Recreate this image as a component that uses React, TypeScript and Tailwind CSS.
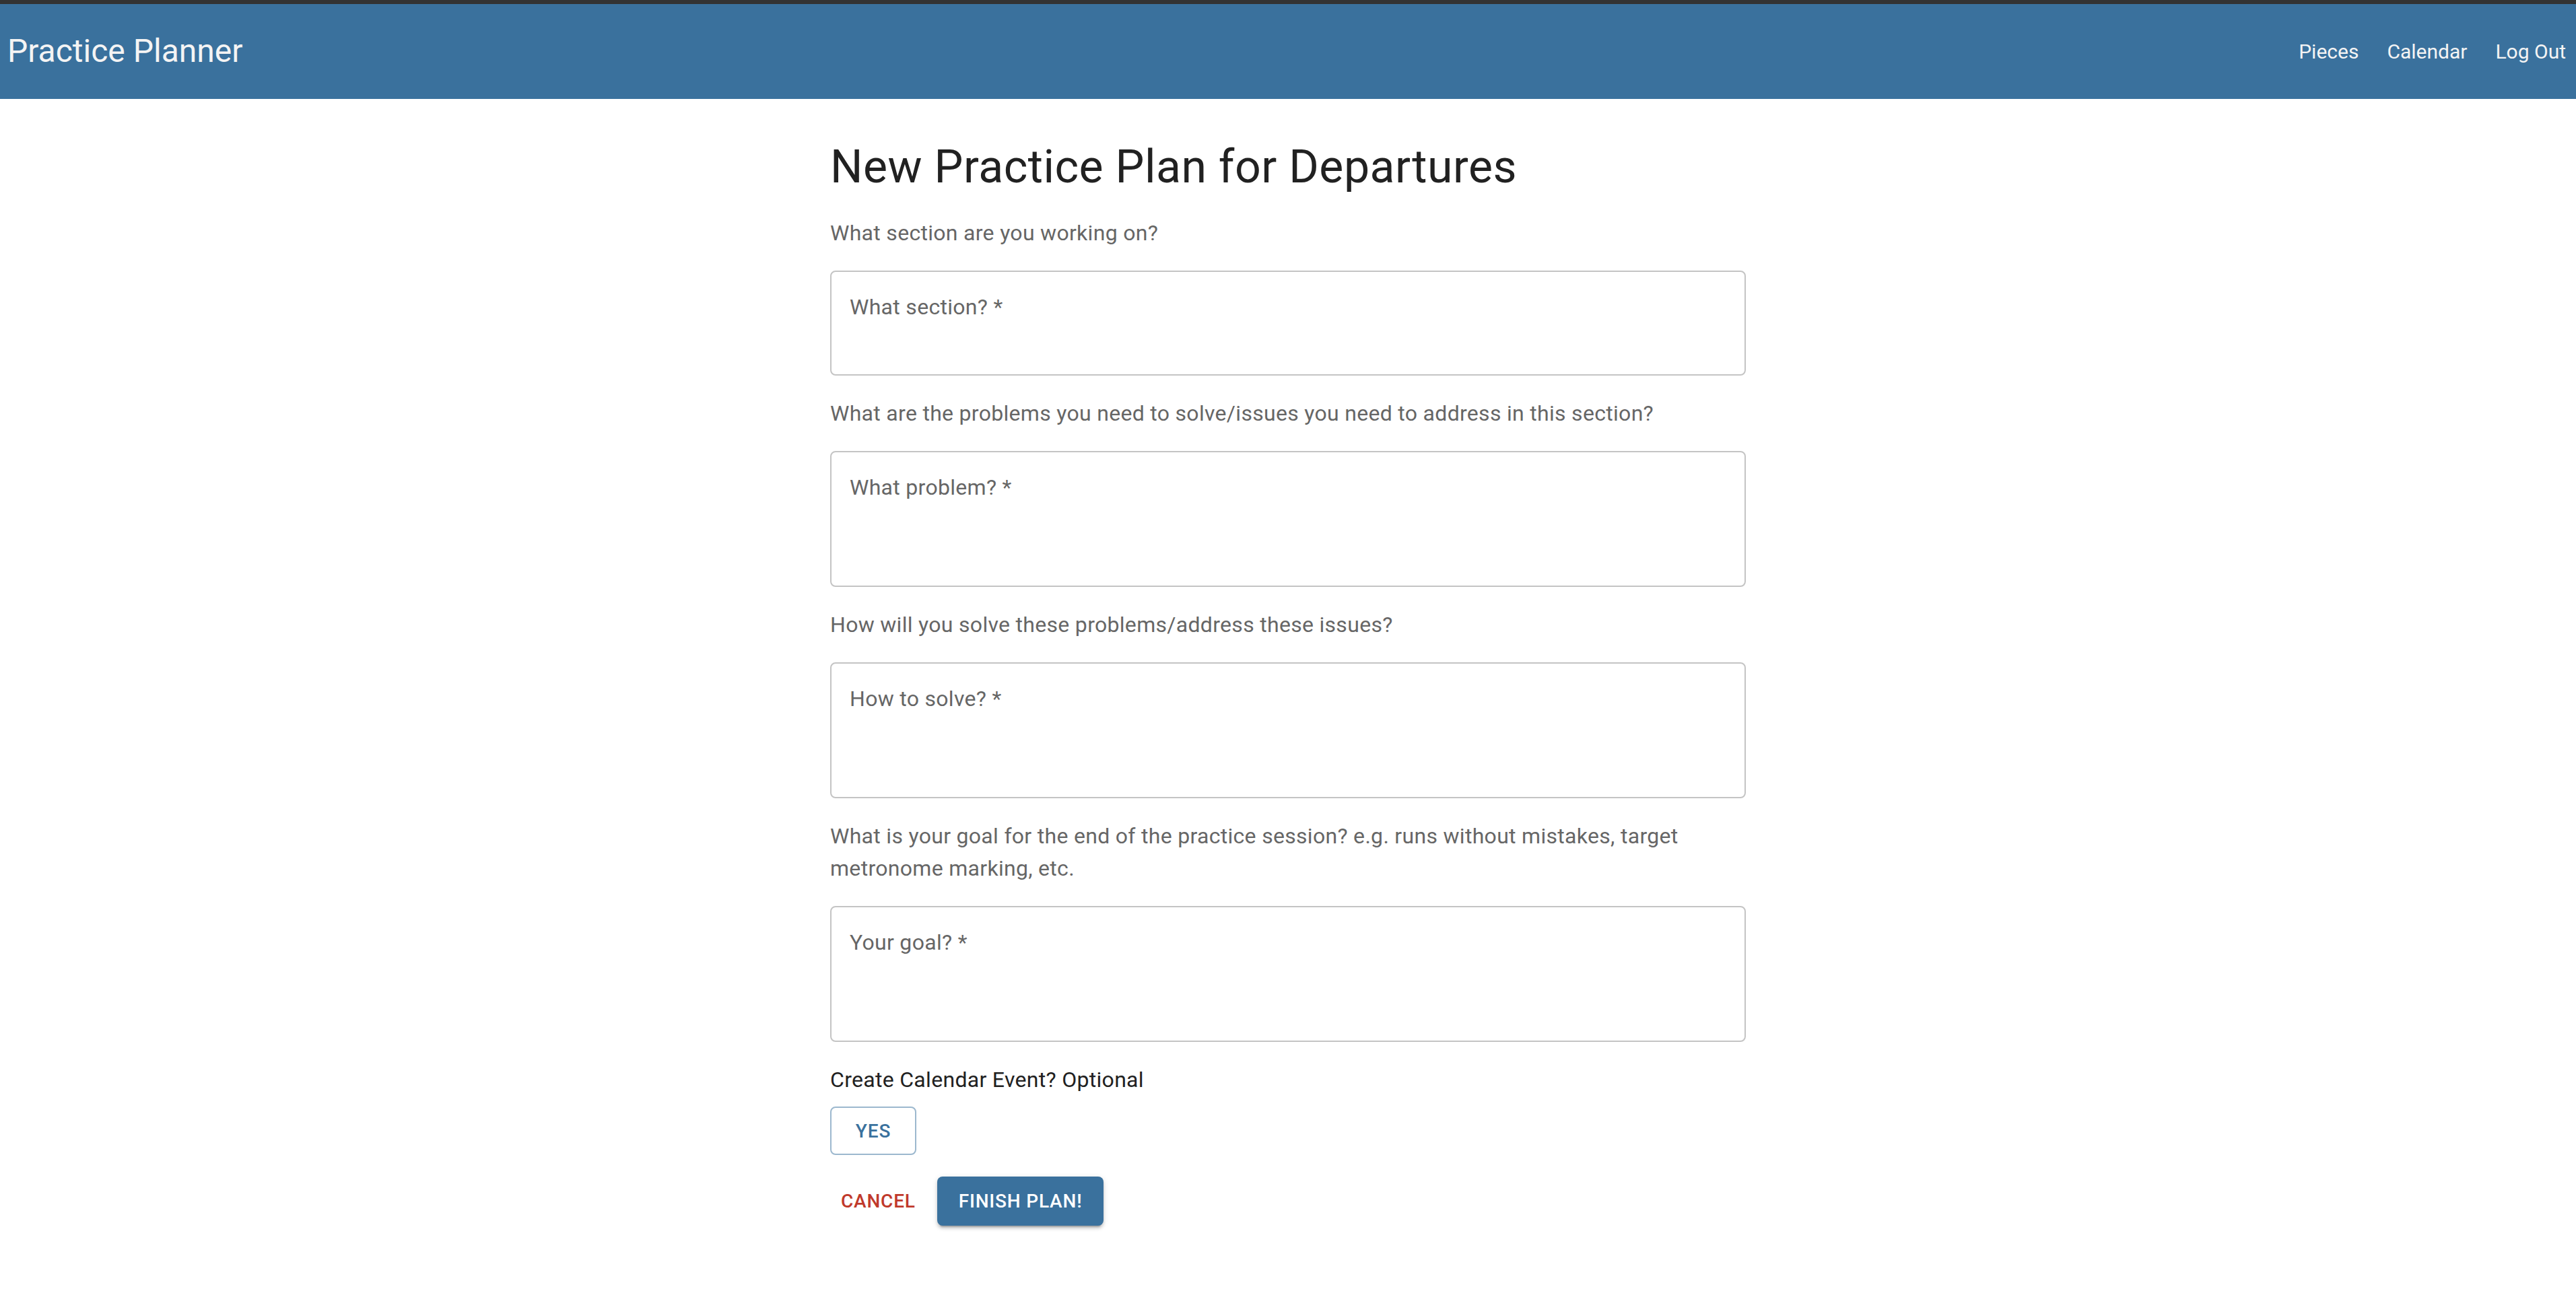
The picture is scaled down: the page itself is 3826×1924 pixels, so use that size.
const questions = [
  {
    prompt: "What section are you working on?",
    label: "What section? *",
    height: "h-[156px]",
  },
  {
    prompt: "What are the problems you need to solve/issues you need to address in this section?",
    label: "What problem? *",
    height: "h-[202px]",
  },
  {
    prompt: "How will you solve these problems/address these issues?",
    label: "How to solve? *",
    height: "h-[202px]",
  },
  {
    prompt:
      "What is your goal for the end of the practice session? e.g. runs without mistakes, target metronome marking, etc.",
    label: "Your goal? *",
    height: "h-[202px]",
  },
];

function OutlinedField({ label, height }: { label: string; height: string }) {
  return (
    <div className={`${height} rounded-[8px] border-2 border-[#c4c4c4] bg-white pl-[27px] pt-[29px]`}>
      <span className="block text-[32px] leading-[46px] tracking-[0.3px] text-[#666666]">{label}</span>
    </div>
  );
}

export default function App() {
  return (
    <div className="min-h-screen bg-white font-['Roboto','Liberation_Sans',sans-serif]">
      <div className="h-[6px] bg-[#333333]" />
      <header className="flex h-[141px] items-center justify-between bg-[#3a719d] pl-[11px] pr-[15px] text-[#f4f4f4]">
        <h1 className="text-[48px] font-normal leading-[1.334]">Practice Planner</h1>
        <nav className="flex items-center gap-[42px] text-[30px] leading-[1.5]">
          <a href="#">Pieces</a>
          <a href="#">Calendar</a>
          <a href="#">Log Out</a>
        </nav>
      </header>

      <main className="mx-auto flex w-[1360px] flex-col gap-[32px] pt-[59px] pb-[80px]">
        <h2 className="text-[68px] font-normal leading-[84px] tracking-[0.5px] text-[#212121]">
          New Practice Plan for Departures
        </h2>

        {questions.map((q) => (
          <div key={q.label} className="flex flex-col gap-[32px]">
            <p className="text-[32px] leading-[48px] tracking-[0.3px] text-[#666666]">{q.prompt}</p>
            <OutlinedField label={q.label} height={q.height} />
          </div>
        ))}

        <div className="flex flex-col items-start gap-[16px]">
          <p className="text-[32px] leading-[48px] tracking-[0.3px] text-[#212121]">
            Create Calendar Event? Optional
          </p>
          <button
            type="button"
            className="flex h-[72px] min-w-[128px] items-center justify-center rounded-[8px] border-2 border-[#9cb8ce] px-[30px] text-[28px] font-medium uppercase leading-[49px] tracking-[0.8px] text-[#3a719d]"
          >
            Yes
          </button>
        </div>

        <div className="flex items-center gap-[16px]">
          <button
            type="button"
            className="flex h-[73px] items-center rounded-[8px] px-[16px] text-[28px] font-medium uppercase leading-[49px] tracking-[0.8px] text-[#c0392b]"
          >
            Cancel
          </button>
          <button
            type="button"
            className="flex h-[73px] items-center rounded-[8px] bg-[#3a719d] px-[32px] text-[28px] font-medium uppercase leading-[49px] tracking-[0.8px] text-white shadow-[0_6px_2px_-4px_rgba(0,0,0,0.2),0_4px_4px_0_rgba(0,0,0,0.14),0_2px_10px_0_rgba(0,0,0,0.12)]"
          >
            Finish Plan!
          </button>
        </div>
      </main>
    </div>
  );
}
